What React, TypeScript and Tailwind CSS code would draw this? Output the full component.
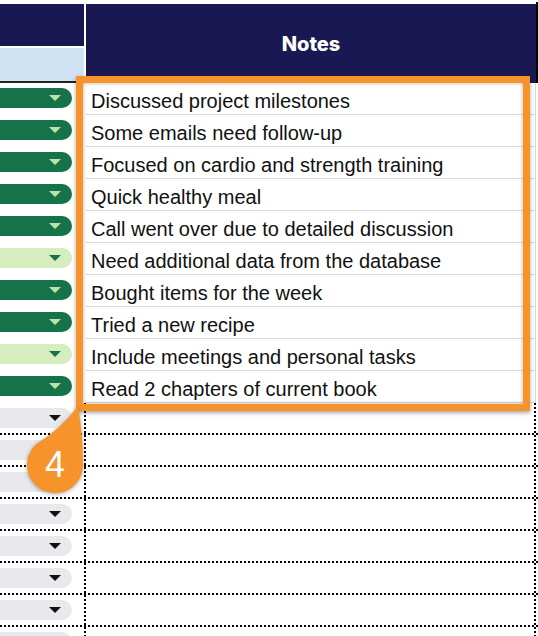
import React from "react";

type Tone = "dark" | "light" | "gray";

const notes: { text: string; tone: Tone }[] = [
  { text: "Discussed project milestones", tone: "dark" },
  { text: "Some emails need follow-up", tone: "dark" },
  { text: "Focused on cardio and strength training", tone: "dark" },
  { text: "Quick healthy meal", tone: "dark" },
  { text: "Call went over due to detailed discussion", tone: "dark" },
  { text: "Need additional data from the database", tone: "light" },
  { text: "Bought items for the week", tone: "dark" },
  { text: "Tried a new recipe", tone: "dark" },
  { text: "Include meetings and personal tasks", tone: "light" },
  { text: "Read 2 chapters of current book", tone: "dark" },
];

const Pill = ({ tone }: { tone: Tone }) => {
  const pill =
    tone === "dark"
      ? "bg-[#16724a]"
      : tone === "light"
      ? "bg-[#d5edbf]"
      : "bg-[#e8e9ec]";
  const arrow =
    tone === "dark"
      ? "border-t-[#bde3a6]"
      : tone === "light"
      ? "border-t-[#16724a]"
      : "border-t-[#111111]";
  return (
    <div
      className={`-ml-[10px] mt-[5px] flex h-[20px] w-[82px] items-center justify-end rounded-full pr-[11px] ${pill}`}
    >
      <div
        className={`h-0 w-0 border-x-[6px] border-t-[6px] border-x-transparent ${arrow}`}
      />
    </div>
  );
};

const App = () => {
  return (
    <div className="relative h-[636px] w-[538px] overflow-hidden bg-white font-['Liberation_Sans',Arial,sans-serif] text-[#111]">
      {/* header */}
      <div className="flex pt-[4px]">
        <div className="flex w-[84px] flex-col">
          <div className="h-[42px] bg-[#1a1852]" />
          <div className="mt-[2px] h-[33px] bg-[#cfe2f3]" />
          <div className="h-[2px] bg-[#222]" />
        </div>
        <div className="ml-[2px] flex h-[79px] w-[450px] items-center justify-center bg-[#1a1852]">
          <span className="font-['Inter',sans-serif] text-[20px] font-extrabold text-white">
            Notes
          </span>
        </div>
        <div className="-mt-[2px] w-[2px] bg-black" />
      </div>

      {/* filled rows */}
      {notes.map((n) => (
        <div key={n.text} className="flex h-[32px]">
          <div className="w-[84px] overflow-hidden">
            <Pill tone={n.tone} />
          </div>
          <div className="ml-[2px] flex w-[450px] items-center border-b border-r border-[#d9d9d9] pl-[5px] pt-[4px] text-[20px] leading-none">
            {n.text}
          </div>
        </div>
      ))}

      {/* empty rows */}
      {Array.from({ length: 8 }).map((_, i) => (
        <div
          key={i}
          className="flex h-[32px] border-b-2 border-dotted border-black"
        >
          <div className="w-[84px] overflow-hidden">
            <Pill tone="gray" />
          </div>
          <div className="w-[452px] border-x-2 border-dotted border-black" />
        </div>
      ))}

      {/* highlight frame */}
      <div className="absolute left-[76px] top-[76px] h-[335px] w-[454px] border-[7px] border-[#f7932b] shadow-[0_2px_4px_rgba(0,0,0,0.35),inset_0_0_4px_rgba(0,0,0,0.3)]" />

      {/* callout balloon */}
      <div className="absolute left-[20px] top-[400px] h-[100px] w-[70px]">
        <svg
          width="70"
          height="100"
          viewBox="0 0 70 100"
          className="drop-shadow-[0_1px_2px_rgba(0,0,0,0.35)]"
        >
          <path
            d="M58 6 Q63 36 62.9 62.6 A28 28 0 1 1 16.1 44.3 Q42 28 58 6 Z"
            fill="#f7932b"
          />
        </svg>
        <span className="absolute left-[25px] top-[47px] text-[36px] font-medium leading-none text-white">
          4
        </span>
      </div>
    </div>
  );
};

export default App;
